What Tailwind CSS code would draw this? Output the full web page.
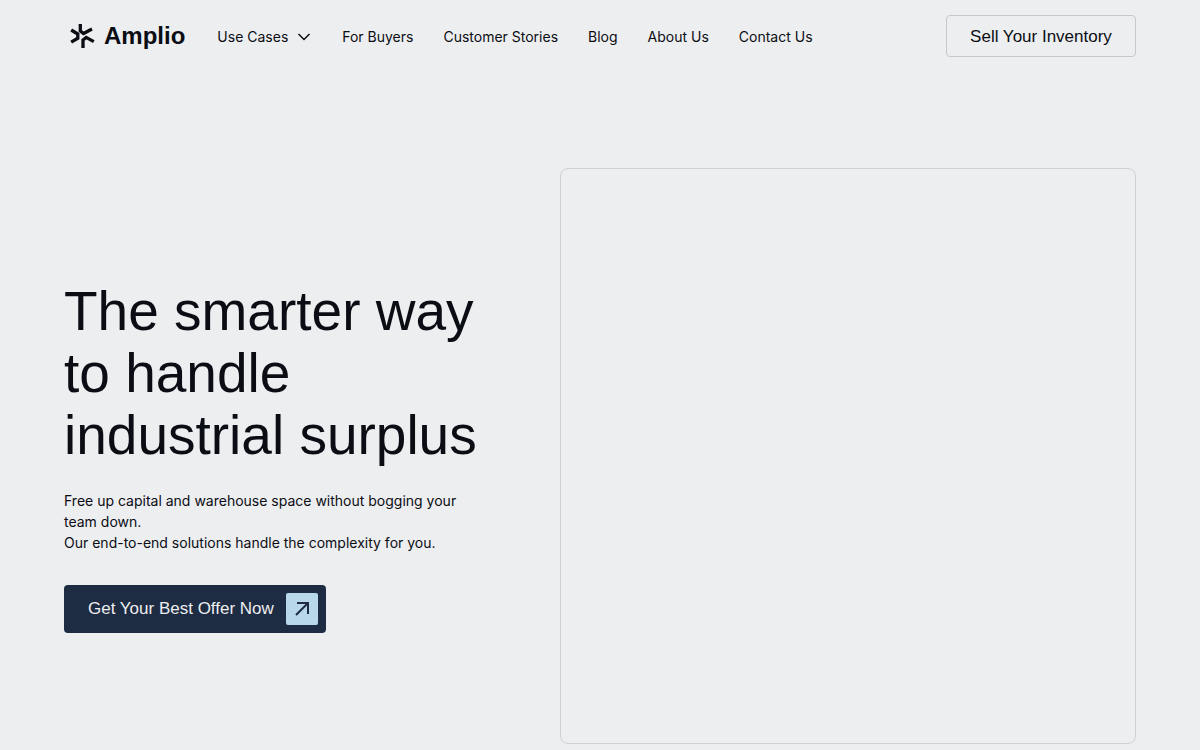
<!DOCTYPE html>
<html lang="en">
<head>
  <meta charset="UTF-8" />
  <meta name="viewport" content="width=device-width, initial-scale=1.0" />
  <title>Amplio</title>
  <script src="https://cdn.jsdelivr.net/npm/@tailwindcss/browser@4"></script>
</head>
<body class="bg-[#edeef0] text-[#0b0d14] min-h-screen font-['Inter',sans-serif]">

  <!-- Header -->
  <header class="flex items-center justify-between h-18 px-16">
    <div class="flex items-center gap-8">
      <a href="#" class="flex items-center gap-2 pl-1 font-['Liberation_Sans',sans-serif] text-2xl font-bold">
        <svg class="size-7" viewBox="0 0 28 28" fill="none" stroke="currentColor" stroke-width="3.3" aria-hidden="true">
          <path d="M12.3 2V9L15.5 11.5L24 7" />
          <path d="M3.2 8L9.8 12V16.2L3.2 20.2" />
          <path d="M15 26V18L18.2 15.4L25.8 19.6" />
        </svg>
        Amplio
      </a>
      <nav class="flex items-center gap-[30px] pt-0.5 text-sm">
        <button type="button" class="flex items-center gap-2">
          Use Cases
          <svg class="size-4" viewBox="0 0 16 16" fill="none" stroke="currentColor" stroke-width="1.5" aria-hidden="true">
            <path d="M2.5 5L8 10.5L13.5 5" />
          </svg>
        </button>
        <a href="#">For Buyers</a>
        <a href="#">Customer Stories</a>
        <a href="#">Blog</a>
        <a href="#">About Us</a>
        <a href="#">Contact Us</a>
      </nav>
    </div>
    <a href="#" class="flex items-center justify-center min-w-[190px] h-[42px] px-5 pt-0.5 border border-[#c6c8cc] rounded font-['Liberation_Sans',sans-serif] text-[17px]">Sell Your Inventory</a>
  </header>

  <!-- Hero -->
  <main class="grid grid-cols-[3fr_4fr] items-center gap-16 px-16 pt-24">
    <section>
      <h1 class="font-['Liberation_Sans',sans-serif] text-[55px] leading-[62px]">The smarter way to handle industrial surplus</h1>
      <p class="mt-6 pr-4 text-sm leading-[21px]">
        Free up capital and warehouse space without bogging your team down.<br />
        Our end-to-end solutions handle the complexity for you.
      </p>
      <a href="#" class="mt-8 inline-flex items-center justify-between gap-3 min-w-[262px] h-12 pl-6 pr-2 rounded bg-[#1e2c43] text-[#edeef0] font-['Liberation_Sans',sans-serif] text-[17px]">
        Get Your Best Offer Now
        <span class="flex items-center justify-center size-8 rounded-xs bg-[#b9d7ea] text-[#1e2c43]">
          <svg class="size-4" viewBox="0 0 16 16" fill="none" stroke="currentColor" stroke-width="2" aria-hidden="true">
            <path d="M2 14L14 2M3 2H14V13" />
          </svg>
        </span>
      </a>
    </section>
    <div class="aspect-square border border-[#cfd1d4] rounded-lg"></div>
  </main>

</body>
</html>
